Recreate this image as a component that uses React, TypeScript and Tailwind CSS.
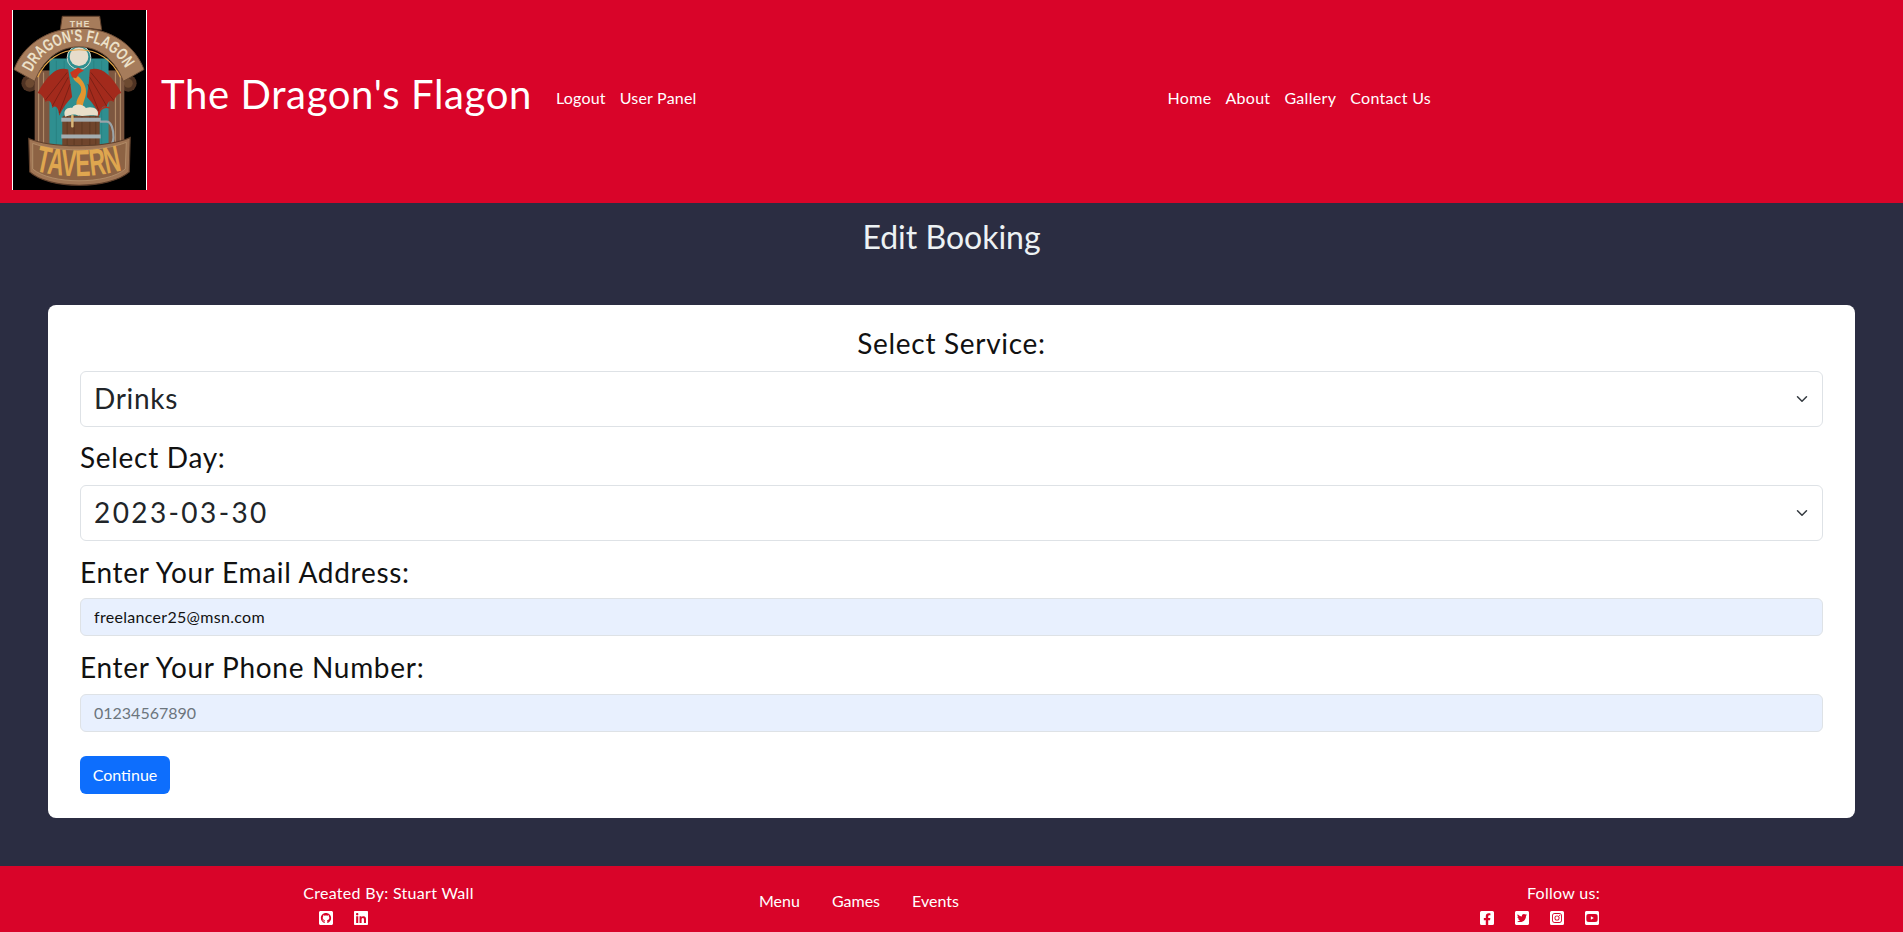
import React from "react";
import {
  FaFacebookSquare,
  FaGithubSquare,
  FaInstagramSquare,
  FaLinkedin,
  FaTwitterSquare,
  FaYoutubeSquare,
} from "react-icons/fa";

const Logo = () => (
  <svg viewBox="0 0 135 180" className="w-[135px] h-[180px] shrink-0 bg-black border-x border-white">
    <defs>
      <path id="archText" d="M19 62 A53 53 0 0 1 116 62" />
      <path id="tavernText" d="M22 162 Q67 173 113 161" />
    </defs>
    {/* pillars and side scrolls */}
    <circle cx="17" cy="73" r="8.5" fill="#4f3323" />
    <circle cx="17" cy="73" r="4.5" fill="#6d4a31" />
    <circle cx="117" cy="73" r="8.5" fill="#4f3323" />
    <circle cx="117" cy="73" r="4.5" fill="#6d4a31" />
    <rect x="22" y="60" width="91" height="85" fill="#7d5740" />
    <path d="M26 62v80M31 62v80M104 62v80M109 62v80" stroke="#b08a68" strokeWidth="1.2" />
    {/* teal panel and moon */}
    <path d="M37 140V48 H97 V140Z" fill="#2f8f90" />
    <path d="M44 50v90M52 50v90M82 50v90M90 50v90" stroke="#277f80" strokeWidth="0.8" />
    <circle cx="67" cy="47" r="12" fill="#2f8f90" stroke="#d3dcd2" strokeWidth="1" />
    <circle cx="67" cy="46" r="9.5" fill="#e6dccb" />
    {/* arch banner */}
    <path d="M1 59 C10 35 34 17 67 17 C100 17 124 35 133 59 L112 71 C104 50 88 36 67 36 C46 36 30 50 22 71Z" fill="#a67c5b" stroke="#6b4a34" strokeWidth="1" />
    <path d="M48 19 L50 5 H88 L90 19 Q67 15 48 19Z" fill="#a67c5b" stroke="#5f3f2b" strokeWidth="1" />
    <path d="M25 67 C33 49 48 39 67 39 C86 39 101 49 109 67" fill="none" stroke="#e3a548" strokeWidth="1.2" />
    <text x="68" y="16" textAnchor="middle" fill="#e6d9bf" fontFamily="'Liberation Sans', sans-serif" fontSize="9" fontWeight="700" letterSpacing="1">THE</text>
    <text fill="#ece1c9" fontFamily="'Liberation Sans', sans-serif" fontSize="17" fontWeight="700">
      <textPath href="#archText" textLength="118" lengthAdjust="spacingAndGlyphs">DRAGON'S FLAGON</textPath>
    </text>
    {/* dragon */}
    <path d="M56 59 C46 56 36 62 25 83 C29 84 31 87 33 92 C36 89 39 91 40 98 C43 95 46 97 47 106 C50 99 54 93 60 87 L58 72Z" fill="#a32a1c" />
    <path d="M78 59 C88 56 99 62 110 83 C106 84 104 87 102 92 C99 89 96 91 95 98 C92 95 89 97 88 106 C85 99 81 93 75 87 L77 72Z" fill="#a32a1c" />
    <path d="M55 62 L33 90M56 67 L40 96M58 74 L47 103M79 62 L102 90M78 67 L95 96M76 74 L88 103" stroke="#711c12" strokeWidth="0.8" />
    <path d="M65 97 C62 88 71 85 69 77 C67 72 62 72 61 67 L66 66 C71 70 75 77 74 84 C73 90 71 92 71 97Z" fill="#e3952f" />
    <path d="M58 62 L66 57 L72 60 L67 63 L64 68 L60 67Z" fill="#c9371f" />
    <path d="M86 111 C85 100 92 96 98 98" fill="none" stroke="#b1301f" strokeWidth="1.5" />
    {/* mug */}
    <path d="M88 112 H95 C100 112 102 120 102 128 C102 134 98 138 92 139" fill="none" stroke="#9aa3a8" strokeWidth="2.2" />
    <rect x="50" y="106" width="38" height="34" rx="2" fill="#70452c" />
    <path d="M55 106v34M62 106v34M70 106v34M78 106v34M84 106v34" stroke="#56341f" strokeWidth="0.7" />
    <rect x="49" y="108" width="40" height="4" fill="#a4adb0" />
    <rect x="49" y="125" width="40" height="4" fill="#a4adb0" />
    <path d="M53 107 C50 100 56 97 60 98 C63 93 71 94 74 98 C81 96 88 99 86 106 C80 104 70 108 64 105 C60 104 57 106 53 107Z" fill="#e9dfc9" />
    <rect x="59" y="105" width="2.5" height="13" rx="1" fill="#d9b679" />
    {/* tavern banner */}
    <path d="M16 129 C40 139 94 139 119 128 L118 163 C98 181 36 181 17 163Z" fill="#a07554" stroke="#5f3f2b" strokeWidth="1.2" />
    <path d="M20 134 C44 143 90 143 115 133 L114 160 C96 176 38 176 20 160Z" fill="#8d6344" stroke="#b8946f" strokeWidth="0.8" />
    <text fill="#dfa64f" fontFamily="'Liberation Sans', sans-serif" fontSize="38" fontWeight="700">
      <textPath href="#tavernText" textLength="90" lengthAdjust="spacingAndGlyphs">TAVERN</textPath>
    </text>
  </svg>
);

const Label = ({ className, children }: { className: string; children: React.ReactNode }) => (
  <label className={`block text-[28px] leading-[29px] tracking-[0.7px] text-[#111] ${className}`}>{children}</label>
);

const SelectBox = ({ value, className }: { value: string; className: string }) => (
  <div className="relative">
    <select
      defaultValue={value}
      className={`block w-full h-14 pl-[13px] pr-9 pb-[3px] rounded-md border border-[#dee2e6] bg-white text-[28px] text-[#212529] appearance-none outline-none ${className}`}
    >
      <option>{value}</option>
    </select>
    <svg viewBox="0 0 16 16" className="absolute right-[15px] top-[22px] w-3 h-3 pointer-events-none" fill="none" stroke="#343a40" strokeWidth="2" strokeLinecap="round" strokeLinejoin="round">
      <path d="m2 5 6 6 6-6" />
    </svg>
  </div>
);

const App = () => {
  return (
    <div className="min-h-[932px] bg-[#2b2d42] font-['Lato',sans-serif] text-white">
      {/* Header */}
      <header className="h-[203px] bg-[#d90429] flex items-start pl-3 pt-2.5">
        <Logo />
        <div className="flex items-center h-[180px] -mt-1.5">
          <h1 className="ml-3.5 text-[40px] leading-[48px] tracking-[0.65px] whitespace-nowrap">The Dragon's Flagon</h1>
        </div>
        <nav className="flex items-center h-[180px] -mt-0.5 ml-6 gap-[14px] text-base tracking-[0.2px]">
          <a>Logout</a>
          <a>User Panel</a>
        </nav>
        <nav className="flex items-center h-[180px] -mt-0.5 ml-[471px] gap-[14px] text-base tracking-[0.3px]">
          <a>Home</a>
          <a>About</a>
          <a>Gallery</a>
          <a>Contact Us</a>
        </nav>
      </header>

      {/* Edit form */}
      <main className="pt-[15px] pb-12">
        <h2 className="mb-[49px] text-[32px] leading-[38px] text-center text-[#edf2f4]">Edit Booking</h2>
        <form className="mx-12 px-8 pt-6 pb-6 bg-white rounded-lg">
          <Label className="mb-[13px] text-center">Select Service:</Label>
          <SelectBox value="Drinks" className="tracking-[0.7px]" />
          <Label className="mt-4 mb-[13px]">Select Day:</Label>
          <SelectBox value="2023-03-30" className="tracking-[2.4px]" />
          <Label className="mt-[17px] mb-[11px]">Enter Your Email Address:</Label>
          <input
            type="text"
            defaultValue="freelancer25@msn.com"
            className="block w-full h-[38px] px-[13px] pb-0.5 rounded-md border border-[#dee2e6] bg-[#e8f0fe] text-base text-[#111] tracking-[0.3px] outline-none"
          />
          <Label className="mt-[17px] mb-3">Enter Your Phone Number:</Label>
          <input
            type="text"
            placeholder="01234567890"
            className="block w-full h-[38px] px-[13px] pb-0.5 rounded-md border border-[#dee2e6] bg-[#e8f0fe] text-base placeholder:text-[#6c757d] outline-none"
          />
          <button type="button" className="block mt-6 w-[90px] h-[38px] rounded-md bg-[#0d6efd] text-base text-white">
            Continue
          </button>
        </form>
      </main>

      {/* Footer */}
      <footer className="h-[66px] overflow-hidden bg-[#d90429] flex items-start pl-[303px] pr-[303px] pt-[17px] text-base">
        <div className="w-[171px]">
          <p className="leading-5 text-center tracking-[0.3px]">Created By: Stuart Wall</p>
          <div className="flex gap-[19px] mt-[7px] ml-[15px]">
            <FaGithubSquare size={16} />
            <FaLinkedin size={16} />
          </div>
        </div>
        <nav className="flex gap-8 ml-[285px] mt-2 leading-5">
          <a>Menu</a>
          <a>Games</a>
          <a>Events</a>
        </nav>
        <div className="ml-auto text-right">
          <p className="leading-5 tracking-[0.3px]">Follow us:</p>
          <div className="flex gap-[19px] mt-[7px]">
            <FaFacebookSquare size={16} />
            <FaTwitterSquare size={16} />
            <FaInstagramSquare size={16} />
            <FaYoutubeSquare size={16} />
          </div>
        </div>
      </footer>
    </div>
  );
};

export default App;
